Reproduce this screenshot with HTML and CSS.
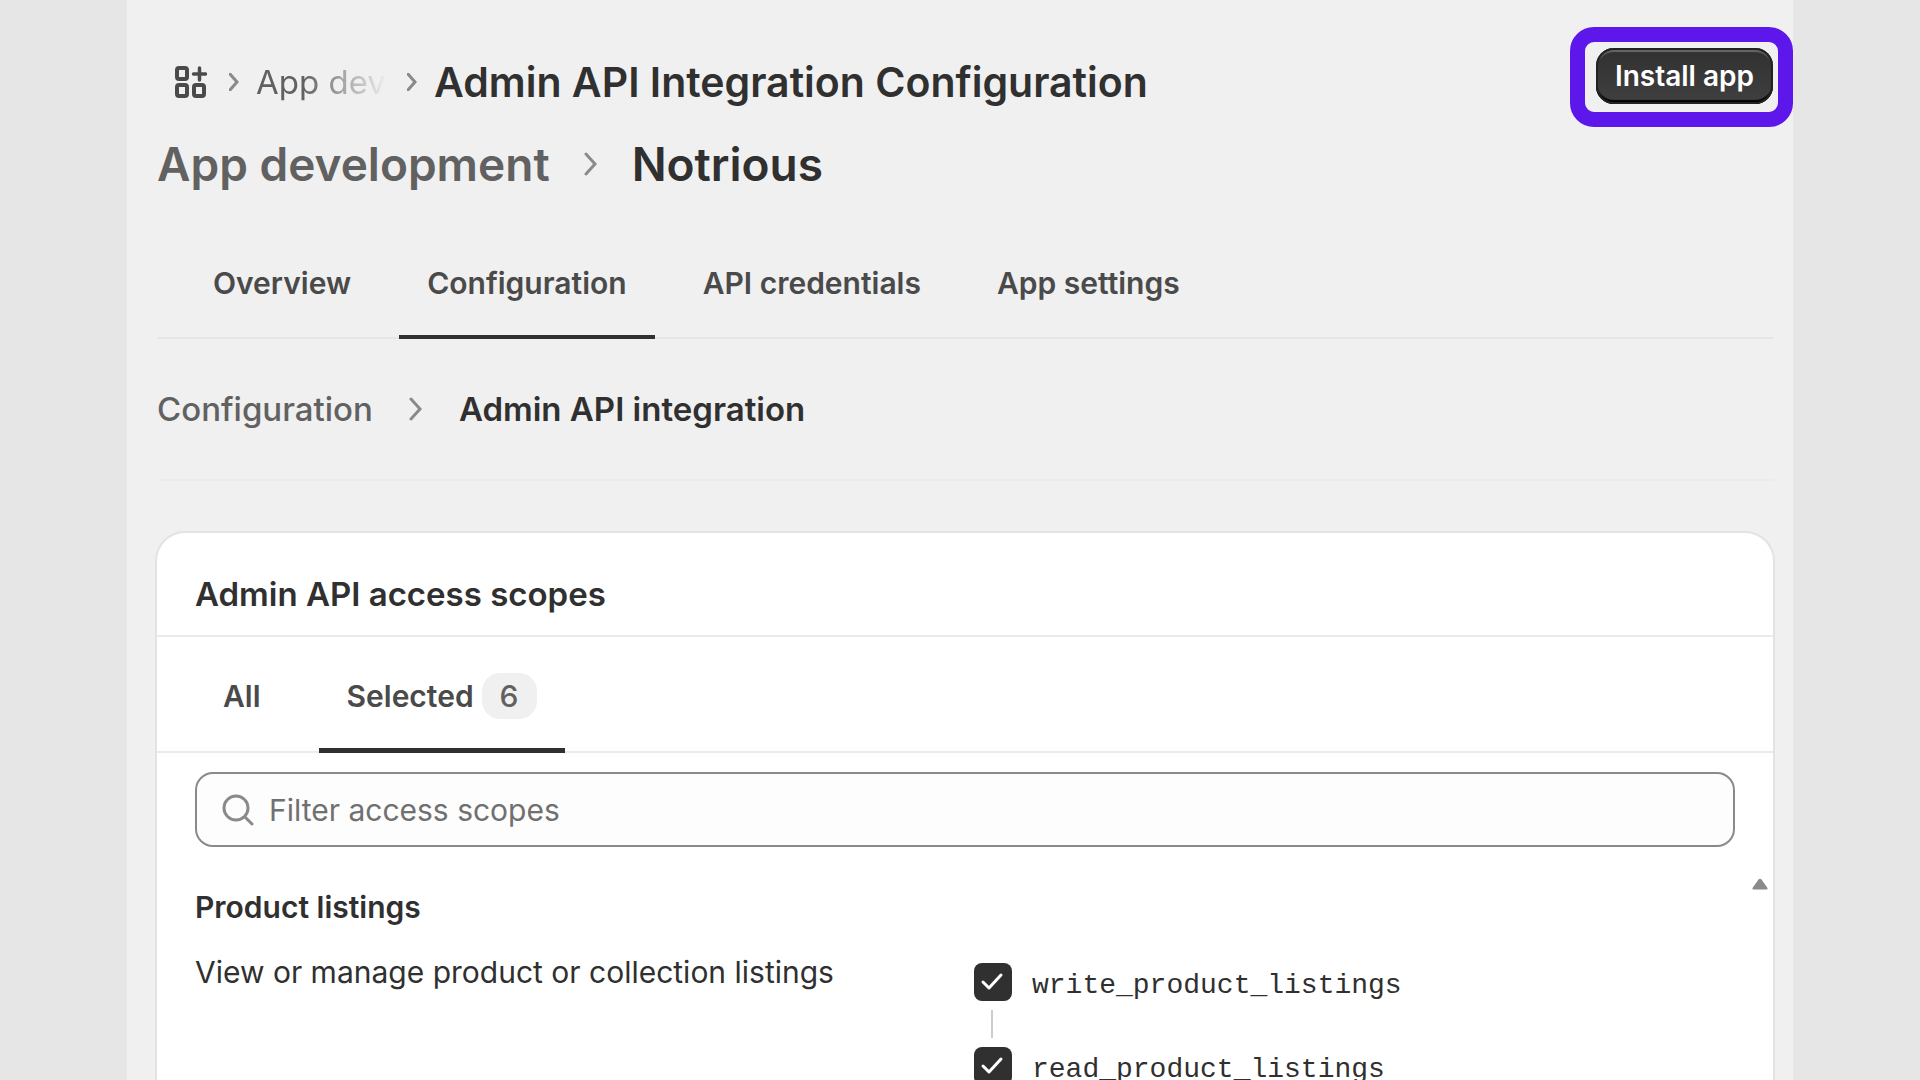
FILE: index.html
```html
<!DOCTYPE html>
<html lang="en">
<head>
<meta charset="utf-8">
<title>Admin API Integration Configuration</title>
<link rel="stylesheet" href="styles.css">
</head>
<body>
<main class="panel">
  <header class="topbar">
    <nav class="trail" aria-label="Breadcrumb">
      <a class="trail-home" href="#" aria-label="Apps">
        <svg width="32" height="32" viewBox="0 0 32 32" fill="none" stroke="currentColor" stroke-width="4"><rect x="2" y="2" width="10" height="11" rx="2"/><rect x="2" y="19" width="10" height="11" rx="2"/><rect x="19" y="19" width="10" height="11" rx="2"/><path d="M24.500 2v12M18.500 8h12" stroke-linecap="round" stroke-width="3.500"/></svg>
      </a>
      <svg class="chev-sm" width="10" height="18" viewBox="0 0 10 18"><path d="M1 1l7 8-7 8"/></svg>
      <a class="trail-link" href="#" aria-label="App development">App dev</a>
      <svg class="chev-sm" width="10" height="18" viewBox="0 0 10 18"><path d="M1 1l7 8-7 8"/></svg>
      <h1 class="trail-title">Admin API Integration Configuration</h1>
    </nav>
    <div class="install">
      <button class="install-btn" type="button">Install app</button>
      <span class="install-ring"></span>
    </div>
  </header>

  <div class="app-name">
    <a href="#">App development</a>
    <svg class="chev" width="14" height="24" viewBox="0 0 14 24"><path d="M2 2l9 10-9 10"/></svg>
    <strong>Notrious</strong>
  </div>

  <nav class="tabs" aria-label="App sections">
    <a class="tab" href="#">Overview</a>
    <a class="tab tab-active" href="#" aria-current="page">Configuration</a>
    <a class="tab" href="#">API credentials</a>
    <a class="tab" href="#">App settings</a>
  </nav>

  <div class="section-trail">
    <a href="#">Configuration</a>
    <svg class="chev" width="14" height="24" viewBox="0 0 14 24"><path d="M2 2l9 10-9 10"/></svg>
    <strong>Admin API integration</strong>
  </div>

  <section class="card">
    <h2 class="card-title">Admin API access scopes</h2>
    <div class="filters">
      <button class="filter" type="button">All</button>
      <button class="filter filter-active" type="button">Selected <span class="badge">6</span></button>
    </div>
    <div class="search">
      <svg width="32" height="32" viewBox="0 0 32 32" fill="none" stroke="#8a8a8a" stroke-width="3" stroke-linecap="round"><circle cx="14" cy="14" r="12"/><path d="M23 23l7 7"/></svg>
      <input type="text" placeholder="Filter access scopes" aria-label="Filter access scopes">
    </div>
    <div class="scopes">
      <div class="scope-info">
        <h3>Product listings</h3>
        <p>View or manage product or collection listings</p>
      </div>
      <div class="scope-list">
        <label class="scope"><input type="checkbox" checked><span>write_product_listings</span></label>
        <span class="link-line"></span>
        <label class="scope"><input type="checkbox" checked><span>read_product_listings</span></label>
      </div>
      <svg class="scroll-up" width="16" height="12" viewBox="0 0 16 12"><path d="M6.500 1.500q1.500-1.500 3 0l6 8.500q.5 1.500-1 1.500h-13q-1.500 0-1-1.500z" fill="#8a8a8a"/></svg>
    </div>
  </section>
</main>
</body>
</html>
```
FILE: styles.css
```css
* { box-sizing: border-box; }

body {
  margin: 0;
  height: 100vh;
  overflow: hidden;
  background: #e6e6e6;
  color: #303030;
  font-family: Inter, "Liberation Sans", sans-serif;
  font-size: 30px;
  line-height: 40px;
}

a { color: inherit; text-decoration: none; }
h1, h2, h3, p { margin: 0; }
strong { font-weight: 600; }
button, input { font: inherit; color: inherit; }
svg { flex: none; }

.panel {
  display: flex;
  flex-direction: column;
  min-height: 100%;
  margin: 0 127px;
  padding: 0 20px 0 30px;
  background: #f0f0f0;
}

/* Top bar */
.topbar {
  display: flex;
  align-items: flex-start;
  justify-content: space-between;
  padding-top: 48px;
}

.trail {
  display: flex;
  align-items: center;
  gap: 17px;
  height: 68px;
  padding-left: 18px;
}

.trail-home { display: flex; margin-right: 5px; color: #4a4a4a; }

.chev-sm, .chev {
  fill: none;
  stroke: #8a8a8a;
  stroke-width: 3;
  stroke-linecap: round;
}

.trail-link {
  width: 134px;
  white-space: nowrap;
  font-size: 33px;
  color: #616161;
  mask-image: linear-gradient(to right, #000 35%, transparent 98%);
}

.trail-title { font-size: 41px; font-weight: 600; white-space: nowrap; }

.install { position: relative; }

.install-btn {
  display: block;
  height: 56px;
  padding: 0 19px;
  border: 0;
  border-radius: 18px;
  background: linear-gradient(#303030, #404040);
  box-shadow: inset 0 0 0 2px #222, inset 0 4px 1px #666, inset 0 -4px 1px #000;
  color: #fff;
  font-size: 28px;
  font-weight: 600;
  line-height: 54px;
}

.install-ring {
  position: absolute;
  inset: -21px -20px -23px -26px;
  border: 15px solid #5d17eb;
  border-radius: 24px;
}

/* App name */
.app-name {
  display: flex;
  align-items: center;
  gap: 34px;
  height: 96px;
  font-size: 46px;
  font-weight: 600;
}

.app-name a, .section-trail a { color: #616161; }

/* Page tabs */
.tabs {
  display: flex;
  gap: 20px;
  height: 127px;
  padding: 0 28px;
  border-bottom: 2px solid #e6e6e6;
}

.tab {
  display: flex;
  align-items: center;
  padding: 18px 28px 0;
  color: #4a4a4a;
  font-weight: 600;
  margin-bottom: -2px;
  border-bottom: 4px solid transparent;
}

.tab-active { border-color: #303030; }

.section-trail {
  display: flex;
  align-items: center;
  gap: 36px;
  height: 142px;
  border-bottom: 2px solid #ebebeb;
  font-size: 33px;
  font-weight: 500;
}

/* Scopes card */
.card {
  flex: 1;
  margin-top: 52px;
  background: #fff;
  box-shadow: 0 0 0 2px #e3e3e3;
  border-radius: 28px 28px 0 0;
}

.card-title {
  padding: 41px 38px 21px;
  border-bottom: 2px solid #ebebeb;
  font-size: 33px;
  font-weight: 600;
}

.filters {
  display: flex;
  gap: 30px;
  height: 116px;
  padding: 0 38px;
  border-bottom: 2px solid #ebebeb;
}

.filter {
  display: flex;
  align-items: center;
  gap: 8px;
  margin-bottom: -2px;
  padding: 6px 28px 0;
  border: 0;
  border-bottom: 5px solid transparent;
  border-radius: 4px 4px 0 0;
  background: none;
  color: #4a4a4a;
  font-weight: 600;
}

.filter-active { border-color: #303030; }

.badge {
  padding: 3px 18px;
  border-radius: 18px;
  background: #f0f0f0;
  color: #616161;
  font-weight: 500;
}

.search {
  display: flex;
  align-items: center;
  gap: 15px;
  height: 75px;
  margin: 19px 38px 0;
  padding: 0 25px;
  border: 2px solid #8a8a8a;
  border-radius: 18px;
  background: #fdfdfd;
}

.search input {
  flex: 1;
  min-width: 0;
  padding: 0;
  border: 0;
  outline: 0;
  background: none;
}

.search input::placeholder { color: #707070; opacity: 1; }

.scopes {
  position: relative;
  display: grid;
  grid-template-columns: 779px 1fr;
  padding: 40px 38px 0;
}

.scope-info h3 { font-size: 30px; font-weight: 600; }
.scope-info p { margin-top: 25px; }

.scope-list { padding-top: 76px; }

.scope {
  display: flex;
  align-items: center;
  gap: 20px;
  height: 38px;
  font-family: "Liberation Mono", monospace;
  font-size: 28px;
}

.scope span { padding-top: 8px; }

.scope input {
  appearance: none;
  width: 38px;
  height: 38px;
  margin: 0;
  border-radius: 8px;
  background: #303030 url("data:image/svg+xml,%3Csvg xmlns='http://www.w3.org/2000/svg' viewBox='0 0 38 38'%3E%3Cpath d='M9 19l6 6 12-13' fill='none' stroke='white' stroke-width='3' stroke-linecap='round' stroke-linejoin='round'/%3E%3C/svg%3E");
}

.link-line {
  display: block;
  width: 2px;
  height: 28px;
  margin: 9px 17px;
  background: #ccc;
}

.scroll-up { position: absolute; top: 31px; right: 5px; }
```
